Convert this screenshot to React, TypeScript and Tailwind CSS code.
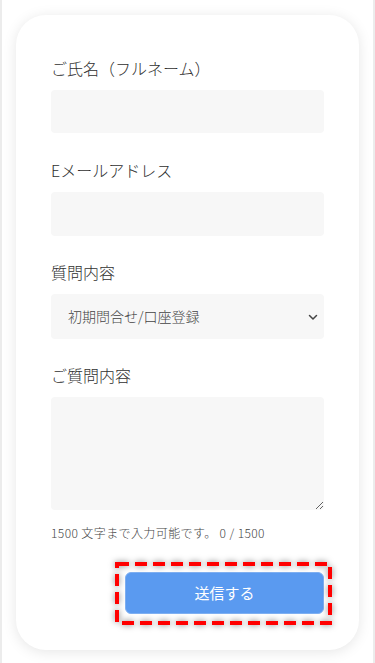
export default function App() {
  const font = { fontFamily: '"Noto Sans CJK JP", "Noto Sans", sans-serif' };
  return (
    <div className="min-h-[663px] w-full bg-white border-x-2 border-[#ececec] pt-[15px] pb-[13px]" style={font}>
      <div className="mx-[14px] rounded-[30px] bg-white shadow-[0_2px_14px_rgba(0,0,0,0.10)] px-[35px] pt-[41px] pb-[36px]">
        <form className="flex flex-col font-light">
          <label className="text-[16px] leading-[24px] text-[#2f2f2f]">ご氏名（フルネーム）</label>
          <input className="mt-[10px] h-[43px] w-full rounded-[4px] bg-[#f7f7f7] outline-none" />

          <label className="mt-[25px] text-[16px] leading-[24px] text-[#2f2f2f]">Eメールアドレス</label>
          <input className="mt-[10px] h-[44px] w-full rounded-[4px] bg-[#f7f7f7] outline-none" />

          <label className="mt-[24px] text-[16px] leading-[24px] text-[#2f2f2f]">質問内容</label>
          <div className="mt-[10px] flex h-[45px] w-full items-center justify-between rounded-[4px] bg-[#f7f7f7] pl-[17px] pr-[3px]">
            <span className="text-[14px] text-[#444]">初期問合せ/口座登録</span>
            <svg width="12" height="12" viewBox="0 0 12 12" fill="none" className="mr-[2px]">
              <path d="M2.5 4.5 6 8l3.5-3.5" stroke="#444" strokeWidth="1.5" strokeLinecap="round" strokeLinejoin="round" />
            </svg>
          </div>

          <label className="mt-[24px] text-[16px] leading-[24px] text-[#2f2f2f]">ご質問内容</label>
          <textarea className="mt-[10px] h-[113px] w-full rounded-[4px] bg-[#f7f7f7] outline-none" />

          <p className="mt-[14px] text-[12px] leading-[18px] tracking-[0.4px] text-[#444]">1500 文字まで入力可能です。 0 / 1500</p>

          <div className="mt-[30px] flex justify-end">
            <div className="relative">
              <svg
                className="pointer-events-none absolute -left-[10px] -top-[10px] drop-shadow-[0_0_3px_rgba(0,0,0,0.5)]"
                width="217"
                height="63"
                viewBox="0 0 217 63"
              >
                <rect x="2" y="2" width="213" height="59" fill="none" stroke="#ff0000" strokeWidth="4" strokeDasharray="12 6" />
              </svg>
              <button type="button" className="h-[42px] w-[199px] rounded-[6px] border border-[#7fb0f2] bg-[#5a9af0] text-[15px] font-normal text-white">
                送信する
              </button>
            </div>
          </div>
        </form>
      </div>
    </div>
  );
}
